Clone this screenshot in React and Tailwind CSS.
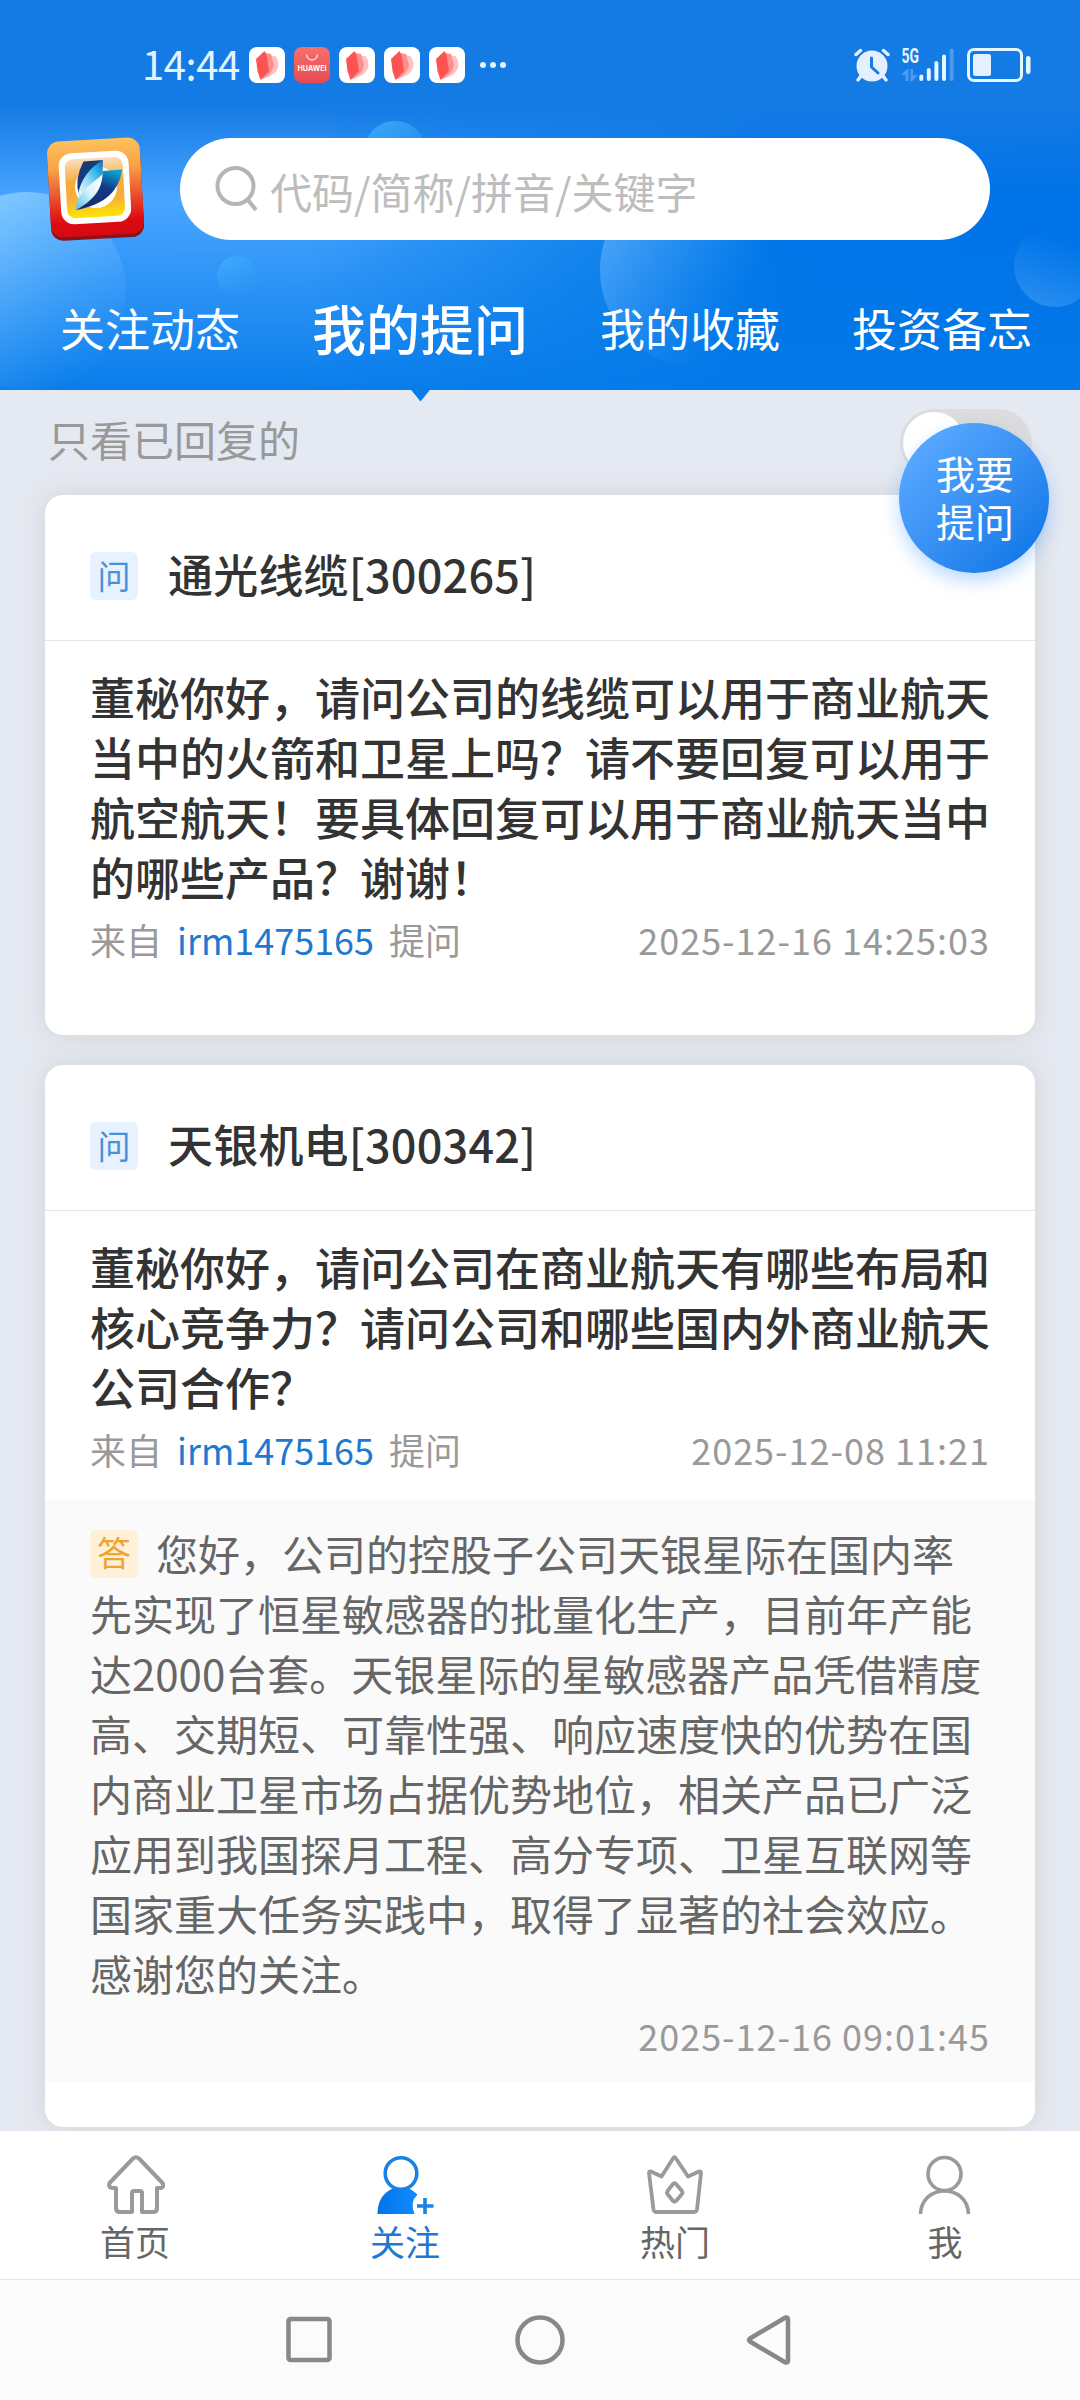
import React, { useState } from 'react';

const perguntas = [
    {
        id: 1,
        empresa: '通光线缆[300265]',
        texto: '董秘你好，请问公司的线缆可以用于商业航天当中的火箭和卫星上吗？请不要回复可以用于航空航天！要具体回复可以用于商业航天当中的哪些产品？谢谢！',
        usuario: 'irm1475165',
        data: '2025-12-16 14:25:03',
    },
    {
        id: 2,
        empresa: '天银机电[300342]',
        texto: '董秘你好，请问公司在商业航天有哪些布局和核心竞争力？请问公司和哪些国内外商业航天公司合作？',
        usuario: 'irm1475165',
        data: '2025-12-08 11:21',
        resposta: {
            texto: '您好，公司的控股子公司天银星际在国内率先实现了恒星敏感器的批量化生产，目前年产能达2000台套。天银星际的星敏感器产品凭借精度高、交期短、可靠性强、响应速度快的优势在国内商业卫星市场占据优势地位，相关产品已广泛应用到我国探月工程、高分专项、卫星互联网等国家重大任务实践中，取得了显著的社会效应。感谢您的关注。',
            data: '2025-12-16 09:01:45',
        },
    },
];

const abas = ['关注动态', '我的提问', '我的收藏', '投资备忘'];

//#region Icones
function IconeLivro() {
    return (
        <svg width="36" height="36" viewBox="0 0 36 36">
            <rect width="36" height="36" rx="8" fill="#fff" />
            <path d="M21 8L27 9.500Q30.500 16 29 21Q26 29 12 32.500Z" fill="#ffc0c0" />
            <path d="M16 6L22 7L25 18Q24 27 12 32.500Z" fill="#ff8f8f" />
            <path d="M7 12L15.500 4L17.500 8L20 24L11.500 33L8.500 24Z" fill="#ff5252" />
        </svg>
    );
}

function IconeHuawei() {
    return (
        <svg width="36" height="36" viewBox="0 0 36 36">
            <defs>
                <linearGradient id="hw" x1="0" y1="0" x2="0" y2="1">
                    <stop offset="0" stopColor="#f5706c" />
                    <stop offset="1" stopColor="#e74a53" />
                </linearGradient>
            </defs>
            <rect width="36" height="36" rx="8" fill="url(#hw)" />
            <path d="M12.500 7.500a5.500 5.500 0 0 0 11 0" fill="none" stroke="#fff" strokeOpacity="0.8" strokeWidth="1.300" />
            <text x="18" y="23.800" textAnchor="middle" textLength="29" lengthAdjust="spacingAndGlyphs" fontSize="7" fontWeight="700" fontFamily="Inter, sans-serif" fill="#fff">HUAWEI</text>
        </svg>
    );
}

function IconeAlarme() {
    return (
        <svg width="36" height="34" viewBox="0 0 36 34">
            <g stroke="#e4f0fd" strokeWidth="3.400" strokeLinecap="round">
                <path d="M2 6.500l4.500-4M34 6.500l-4.500-4M7 28l-3 4M29 28l3 4" />
            </g>
            <circle cx="18" cy="18" r="15.500" fill="#e4f0fd" />
            <path d="M17.500 10v9l6.500 6" fill="none" stroke="#147ae4" strokeWidth="3" strokeLinecap="round" strokeLinejoin="round" />
        </svg>
    );
}

function IconeSinal() {
    return (
        <svg width="54" height="48" viewBox="0 -6 54 48">
            <text x="0.500" y="15.500" textLength="17.500" lengthAdjust="spacingAndGlyphs" fontSize="20.500" fontWeight="700" fontFamily="Roboto, sans-serif" fill="#e4f6ff">5G</text>
            <path d="M0 28l6-6h1.500v12H4.500v-6zM9.500 22h2.500v6h5l-6 6.500h-1.500z" fill="#4d9bef" />
            <g strokeWidth="4" strokeLinecap="round" stroke="#e4f6ff">
                <path d="M20.300 29.500v2.500M27.800 23v9M35.400 16v16M43 9.500V32" />
                <path d="M50.700 3.500V32" stroke="#4d9bef" />
            </g>
        </svg>
    );
}

function IconeBateria() {
    return (
        <svg width="64" height="34" viewBox="0 0 64 34">
            <rect x="1.500" y="1.500" width="53" height="31" rx="5.500" fill="none" stroke="#e4f6ff" strokeWidth="3" />
            <rect x="6" y="6" width="18" height="22" rx="2.500" fill="#e4f0fd" />
            <rect x="59" y="8" width="4.500" height="18" rx="2.200" fill="#e4f6ff" />
        </svg>
    );
}

function LogoApp() {
    return (
        <svg width="98" height="104" viewBox="0 0 98 104">
            <defs>
                <linearGradient id="moldura" x1="0" y1="0" x2="0" y2="1">
                    <stop offset="0" stopColor="#fdc25c" />
                    <stop offset="0.300" stopColor="#f8a048" />
                    <stop offset="0.850" stopColor="#de0a10" />
                    <stop offset="1" stopColor="#d50a12" />
                </linearGradient>
                <linearGradient id="miolo" x1="0" y1="0" x2="0" y2="1">
                    <stop offset="0" stopColor="#fbe0bd" />
                    <stop offset="0.400" stopColor="#f6a93b" />
                    <stop offset="0.700" stopColor="#f8b03a" />
                    <stop offset="1" stopColor="#ffe600" />
                </linearGradient>
                <linearGradient id="folhaA" x1="0" y1="1" x2="1" y2="0">
                    <stop offset="0" stopColor="#f2fbff" />
                    <stop offset="0.400" stopColor="#9adcf6" />
                    <stop offset="0.700" stopColor="#2fb4e6" />
                    <stop offset="1" stopColor="#0c6fb8" />
                </linearGradient>
                <linearGradient id="folhaC" x1="0" y1="1" x2="1" y2="0">
                    <stop offset="0" stopColor="#4cc0ec" />
                    <stop offset="0.500" stopColor="#d8f3fd" />
                    <stop offset="1" stopColor="#fff" />
                </linearGradient>
                <linearGradient id="folhaB" x1="0.300" y1="1" x2="0.700" y2="0">
                    <stop offset="0" stopColor="#1a2a70" />
                    <stop offset="0.600" stopColor="#123a86" />
                    <stop offset="1" stopColor="#0aa0cf" />
                </linearGradient>
            </defs>
            <g transform="rotate(-3.200 49 52)">
                <rect x="3" y="5" width="93" height="97" rx="12" fill="#8e1119" />
                <rect x="3" y="2.500" width="93" height="96" rx="12" fill="url(#moldura)" />
                <rect x="14" y="15" width="70" height="71" rx="13" fill="#fff" />
                <rect x="20" y="21" width="58" height="59" rx="8" fill="url(#miolo)" />
            </g>
            <circle cx="50" cy="50" r="21" fill="#fff" />
            <path d="M37.500 24.500L57 23C47 30 38 42 33 59Q28 42 37.500 24.500Z" fill="#173a7c" />
            <path d="M57 23L56.500 37C48 47 40 52 31.500 59C35 42 43 31 57 23Z" fill="url(#folhaA)" />
            <path d="M56.500 38C57 50 50 62 30 73C30 62 34 54 56.500 38Z" fill="url(#folhaC)" />
            <path d="M56.500 34L76 32.500C74 52 60 68 30 73C50 62 57 50 56.500 34Z" fill="url(#folhaB)" />
        </svg>
    );
}

function IconeCasa() {
    return (
        <svg width="60" height="60" viewBox="0 0 60 60" fill="none" stroke="#9a9a9a" strokeWidth="4" strokeLinejoin="round">
            <path d="M28 4.500Q31 2 34 4.500L57.500 29Q59.500 33 56 34H52V54Q52 58 48 58H37V39Q37 37 35 37H29Q27 37 27 39V58H15Q11 58 11 54V34H7Q3 33 4.500 29Z" />
        </svg>
    );
}

function IconeSeguir() {
    return (
        <svg width="60" height="60" viewBox="0 0 60 60">
            <defs>
                <linearGradient id="seguir" x1="0" y1="0" x2="1" y2="0">
                    <stop offset="0" stopColor="#0074e8" />
                    <stop offset="1" stopColor="#128cff" />
                </linearGradient>
            </defs>
            <circle cx="26" cy="19.500" r="15.800" fill="none" stroke="#1a82e6" strokeWidth="3.600" />
            <path d="M2.500 60C2.500 46 9 38 18 34.500Q26 38 34 34.500Q39 37 42.500 40.500Q34.500 48 39.500 60Z" fill="url(#seguir)" />
            <path d="M42 52H58.500M50 44V60" stroke="#1a82e6" strokeWidth="3.600" />
        </svg>
    );
}

function IconeCoroa() {
    return (
        <svg width="60" height="60" viewBox="0 0 60 60" fill="none" stroke="#9a9a9a" strokeWidth="3.800" strokeLinejoin="round">
            <path d="M28 4.500Q29.500 2 31 4.500L43 22.500L54 17.500Q56 17 56 19L52 55.500Q51.500 58 49 58H11Q9 58 8.500 55.500L4 19Q4 17 6 17.500L16.500 22.500Z" />
            <path d="M28 30Q29.500 28.500 31 30L37 37Q38 38.500 37 40L31 47Q29.500 48.500 28 47L22.500 40Q21.500 38.500 22.500 37Z" />
        </svg>
    );
}

function IconePessoa() {
    return (
        <svg width="60" height="60" viewBox="0 0 60 60" fill="none" stroke="#9a9a9a" strokeWidth="3.600">
            <circle cx="29.500" cy="20" r="16.500" />
            <path d="M5.500 60C6 45.500 16.500 37 29.500 37S53 45.500 53.500 60" />
        </svg>
    );
}
//#endregion

function FundoTopo() {
    return (
        <svg className="absolute inset-0" width="1080" height="390" viewBox="0 0 1080 390">
            <defs>
                <linearGradient id="base" x1="0" y1="0" x2="1" y2="0">
                    <stop offset="0" stopColor="#46a3ff" />
                    <stop offset="0.280" stopColor="#48a5ff" />
                    <stop offset="0.500" stopColor="#1f8cf1" />
                    <stop offset="0.720" stopColor="#0076e8" />
                    <stop offset="1" stopColor="#0073e8" />
                </linearGradient>
                <linearGradient id="topo" x1="0" y1="0" x2="0" y2="1">
                    <stop offset="0.270" stopColor="#147ae4" />
                    <stop offset="0.500" stopColor="#147ae4" stopOpacity="0" />
                </linearGradient>
                <linearGradient id="baixo" x1="0" y1="0" x2="0" y2="1">
                    <stop offset="0.520" stopColor="#0379e8" stopOpacity="0" />
                    <stop offset="1" stopColor="#0379e8" stopOpacity="0.900" />
                </linearGradient>
                <linearGradient id="bolha" x1="0" y1="0" x2="0.800" y2="1">
                    <stop offset="0" stopColor="#a5deff" stopOpacity="0.900" />
                    <stop offset="0.900" stopColor="#5cb4ff" stopOpacity="0.050" />
                </linearGradient>
                <linearGradient id="bolhaMeio" x1="0" y1="0.200" x2="0.800" y2="0.700">
                    <stop offset="0" stopColor="#6bb7ff" stopOpacity="0.700" />
                    <stop offset="0.900" stopColor="#3a9bf7" stopOpacity="0" />
                </linearGradient>
                <linearGradient id="bolhaDir" x1="0" y1="1" x2="0.300" y2="0">
                    <stop offset="0" stopColor="#3c9bf5" stopOpacity="0.700" />
                    <stop offset="0.900" stopColor="#3c9bf5" stopOpacity="0" />
                </linearGradient>
                <linearGradient id="bolhaMini" x1="0" y1="0" x2="0.500" y2="1">
                    <stop offset="0" stopColor="#3cb2fa" stopOpacity="0.900" />
                    <stop offset="1" stopColor="#3497f7" stopOpacity="0.200" />
                </linearGradient>
            </defs>
            <rect width="1080" height="390" fill="url(#base)" />
            <rect width="1080" height="390" fill="url(#baixo)" />
            <rect width="1080" height="390" fill="url(#topo)" />
            <circle cx="27" cy="291" r="99" fill="url(#bolha)" />
            <circle cx="237" cy="276" r="20" fill="url(#bolhaMini)" />
            <circle cx="395" cy="152" r="31" fill="url(#bolhaMini)" />
            <circle cx="697" cy="270" r="97" fill="url(#bolhaMeio)" />
            <circle cx="1055" cy="266" r="41" fill="url(#bolhaDir)" />
        </svg>
    );
}

function BarraStatus() {
    return (
        <div className="flex h-[130px] items-start justify-between pt-[41px] pl-[142px] pr-[49px]">
            <div className="flex h-12 items-center">
                <span className="-mt-[5px] w-[107px] text-[40px] leading-[48px] tracking-[-0.4px] text-[#e4f4ff]">14:44</span>
                <div className="flex gap-[9px]">
                    <IconeLivro />
                    <IconeHuawei />
                    <IconeLivro />
                    <IconeLivro />
                    <IconeLivro />
                </div>
                <div className="ml-[15px] flex gap-[4px]">
                    <i className="h-[6px] w-[6px] rounded-full bg-[#e4f4ff]" />
                    <i className="h-[6px] w-[6px] rounded-full bg-[#e4f4ff]" />
                    <i className="h-[6px] w-[6px] rounded-full bg-[#e4f4ff]" />
                </div>
            </div>
            <div className="flex h-12 items-center">
                <IconeAlarme />
                <div className="ml-[11px] mr-[12px]"><IconeSinal /></div>
                <IconeBateria />
            </div>
        </div>
    );
}

function Cartao({ item }) {
    return (
        <div className="shrink-0 overflow-hidden rounded-[18px] bg-white pb-[45px] shadow-[0_0_24px_rgba(200,205,200,0.7)]">
            <div className="flex h-[146px] items-center border-b border-[#e6e6e6] pt-[17px] pl-[45px]">
                <span className="h-12 w-12 rounded-md bg-[#e6f3ff] text-center text-[33px] leading-[46px] text-[#4a90d9]">问</span>
                <h2 className="-mt-[4px] ml-[30px] text-[45px] font-medium leading-[60px] tracking-[0.2px] text-[#333]">{item.empresa}</h2>
            </div>

            <div className="px-[45px] pt-[26px] pb-[17px]">
                <p className="text-[45px] font-medium leading-[60px] text-[#333]">{item.texto}</p>
                <div className="mt-[2px] flex h-16 items-center justify-between pb-[4px] text-[36px] text-[#999]">
                    <div className="flex gap-[15px]">
                        <span>来自</span>
                        <span className="text-[#1f78d0]">{item.usuario}</span>
                        <span>提问</span>
                    </div>
                    <span className="tracking-[1px]">{item.data}</span>
                </div>
            </div>

            {/* Resposta da empresa */}
            {item.resposta && (
                <div className="bg-[#fafafa] px-[45px] pt-[23px] pb-[15px]">
                    <p className="text-[42px] leading-[60px] text-[#666]">
                        <span className="mt-[7px] mr-[18px] inline-block h-12 w-12 rounded-md bg-[#fff0d9] text-center align-top text-[34px] leading-[44px] text-[#f0a430]">答</span>
                        {item.resposta.texto}
                    </p>
                    <div className="flex h-16 items-center justify-end text-[36px] tracking-[1px] text-[#999]">
                        {item.resposta.data}
                    </div>
                </div>
            )}
        </div>
    );
}

function ItemMenu({ icone, texto, ativo }) {
    return (
        <button className="flex flex-1 flex-col items-center pt-[23px]">
            {icone}
            <span className={`-mt-[3px] text-[35px] leading-[60px] ${ativo ? 'text-[#1f78d0]' : 'text-[#666]'}`}>{texto}</span>
        </button>
    );
}

export default function App() {
    const [aba, setAba] = useState('我的提问');

    return (
        <div className="relative flex h-[2400px] w-[1080px] flex-col overflow-hidden bg-[#e5e9f2] font-['Noto_Sans_CJK_SC',sans-serif]">
            {/* Topo */}
            <header className="relative h-[390px] shrink-0">
                <FundoTopo />
                <div className="relative">
                    <BarraStatus />
                    <div className="flex items-center pt-[7px] pl-[46px]">
                        <LogoApp />
                        <div className="ml-[36px] flex h-[102px] w-[810px] items-center rounded-full bg-white pl-[35px]">
                            <svg width="44" height="46" viewBox="0 0 44 46" fill="none" stroke="#b5b5b5" strokeWidth="4">
                                <circle cx="20.500" cy="20" r="18" />
                                <path d="M32.500 33.500L41 44" />
                            </svg>
                            <span className="mt-[3px] ml-[11px] text-[42px] leading-[60px] text-[#bdbdbd]">代码/简称/拼音/关键字</span>
                        </div>
                    </div>
                    <nav className="flex h-[124px] items-center gap-[72px] pl-[60px] pt-[49px] text-white">
                        {abas.map((nome) => (
                            <button
                                key={nome}
                                onClick={() => setAba(nome)}
                                className={`relative leading-[60px] ${aba === nome ? 'text-[54px] font-medium' : 'text-[45px]'}`}
                            >
                                {nome}
                            </button>
                        ))}
                    </nav>
                </div>
                <svg className="absolute top-[386px] left-[408px]" width="25" height="16" viewBox="0 0 25 16">
                    <path d="M0 0H25L12.500 15.500Z" fill="#087be9" />
                </svg>
            </header>

            {/* Lista */}
            <main className="flex h-[1741px] flex-col overflow-hidden px-[45px]">
                <div className="flex h-[105px] shrink-0 items-center justify-between pr-[3px] pl-[3px]">
                    <span className="-mt-[7px] text-[42px] leading-[60px] text-[#999]">只看已回复的</span>
                    <div className="flex h-[68px] w-[132px] items-center rounded-full bg-[#dcdcdc] px-[3px]">
                        <div className="h-[62px] w-[62px] rounded-full bg-white" />
                    </div>
                </div>
                <div className="flex flex-col gap-[30px]">
                    {perguntas.map((item) => <Cartao key={item.id} item={item} />)}
                </div>
            </main>

            {/* Menu inferior */}
            <nav className="flex h-[148px] shrink-0 bg-white">
                <ItemMenu icone={<IconeCasa />} texto="首页" />
                <ItemMenu icone={<IconeSeguir />} texto="关注" ativo />
                <ItemMenu icone={<IconeCoroa />} texto="热门" />
                <ItemMenu icone={<IconePessoa />} texto="我" />
            </nav>
            <div className="flex h-[121px] items-center justify-center gap-[180px] border-t border-[#e6e6e6] bg-[#fbfbfb]">
                <svg width="50" height="50" viewBox="0 0 50 50" fill="none" stroke="#888" strokeWidth="4.500">
                    <rect x="3.500" y="4" width="41" height="41" rx="2" />
                </svg>
                <svg width="50" height="50" viewBox="0 0 50 50" fill="none" stroke="#888" strokeWidth="4.500">
                    <circle cx="25" cy="25" r="22.500" />
                </svg>
                <svg width="50" height="50" viewBox="0 0 50 50" fill="none" stroke="#888" strokeWidth="4.500" strokeLinejoin="round">
                    <path d="M40.500 2.500Q43 2 43 4.500V45.500Q43 48 40.500 47.500L5 26.500Q3 25 5 23.500Z" />
                </svg>
            </div>

            {/* Botão flutuante */}
            <button className="absolute top-[423px] left-[899px] flex h-[150px] w-[150px] flex-col items-center justify-center rounded-full bg-linear-135 from-[#55a7ff] from-15% to-[#0d78e8] to-90% pb-[5px] pl-[2px] text-[39px] leading-[48px] text-white shadow-[0_8px_18px_rgba(60,150,255,0.35)]">
                我要<br />提问
            </button>
        </div>
    );
}
